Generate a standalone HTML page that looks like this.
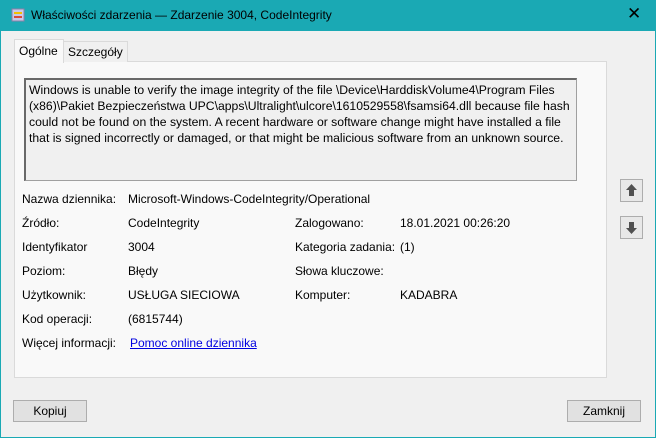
<!DOCTYPE html><html><head><style>
body{margin:0;width:656px;height:438px;background:#1aa9b4;font-family:"Liberation Sans",sans-serif;font-size:12px;color:#000;overflow:hidden;position:relative}
.win{position:absolute;left:1px;top:31px;width:654px;height:406px;background:#f0f0f0}
.title{position:absolute;left:0;top:0;width:656px;height:31px}
.abs{position:absolute;white-space:nowrap}
.panel{position:absolute;left:13px;top:30px;width:591px;height:315px;background:#f9f9f9;border:1px solid #dadada}
.tab{position:absolute;height:22px;line-height:22px;padding:0 4px}
.tb{position:absolute;left:23px;top:47px;width:544px;height:96px;border:1px solid #a0a0a0;border-top:2px solid #696969;border-left:2px solid #696969;background:#f0f0f0;padding:2px 3px;line-height:16px;font-size:12.2px;letter-spacing:0;white-space:nowrap;overflow:hidden}
.btn{position:absolute;width:72px;height:20px;border:1px solid #adadad;background:#e1e1e1;text-align:center;line-height:20px}
.ar{position:absolute;left:619px;width:21px;height:21px;border:1px solid #adadad;background:#e8e8e8}
</style></head><body>
<div class="title">
<svg class="abs" style="left:11px;top:8px" width="14" height="14"><rect x="1" y="1" width="12" height="12" fill="#c9c9e8" stroke="#8d7fa6"/><rect x="3" y="4" width="8" height="2" fill="#f2c000"/><rect x="3" y="8" width="8" height="2" fill="#d84a3a"/></svg>
<div class="abs" style="left:31px;top:8px;font-size:12px;color:#000">Właściwości zdarzenia — Zdarzenie 3004, CodeIntegrity</div>
<div class="abs" style="left:627px;top:4px;font-size:17px;color:#000">✕</div>
</div>
<div class="win">
<div class="panel"></div>
<div class="tab" style="left:13px;top:8px;height:23px;background:#f9f9f9;border:1px solid #dadada;border-bottom:none;width:40px">Ogólne</div>
<div class="tab" style="left:62px;top:10px;height:20px;line-height:20px;border:1px solid #dadada;border-bottom:none;background:#f0f0f0">Szczegóły</div>
<div class="tb">Windows is unable to verify the image integrity of the file \Device\HarddiskVolume4\Program Files<br>(x86)\Pakiet Bezpieczeństwa UPC\apps\Ultralight\ulcore\1610529558\fsamsi64.dll because file hash<br>could not be found on the system. A recent hardware or software change might have installed a file<br>that is signed incorrectly or damaged, or that might be malicious software from an unknown source.</div>
<div class="abs" style="left:21px;top:161px">Nazwa dziennika:</div><div class="abs" style="left:127px;top:161px">Microsoft-Windows-CodeIntegrity/Operational</div>
<div class="abs" style="left:21px;top:185px">Źródło:</div><div class="abs" style="left:127px;top:185px">CodeIntegrity</div>
<div class="abs" style="left:294px;top:185px">Zalogowano:</div><div class="abs" style="left:399px;top:185px">18.01.2021 00:26:20</div>
<div class="abs" style="left:21px;top:209px">Identyfikator</div><div class="abs" style="left:127px;top:209px">3004</div>
<div class="abs" style="left:294px;top:209px">Kategoria zadania:</div><div class="abs" style="left:399px;top:209px">(1)</div>
<div class="abs" style="left:21px;top:233px">Poziom:</div><div class="abs" style="left:127px;top:233px">Błędy</div>
<div class="abs" style="left:294px;top:233px">Słowa kluczowe:</div>
<div class="abs" style="left:21px;top:257px">Użytkownik:</div><div class="abs" style="left:127px;top:257px">USŁUGA SIECIOWA</div>
<div class="abs" style="left:294px;top:257px">Komputer:</div><div class="abs" style="left:399px;top:257px">KADABRA</div>
<div class="abs" style="left:21px;top:281px">Kod operacji:</div><div class="abs" style="left:127px;top:281px">(6815744)</div>
<div class="abs" style="left:21px;top:305px">Więcej informacji:</div><div class="abs" style="left:129px;top:305px;color:#0000e0;text-decoration:underline">Pomoc online dziennika</div>
<div class="ar" style="top:148px"><svg width="21" height="21"><path d="M10.5 4L16 10H13V16H8V10H5Z" fill="#505050"/></svg></div>
<div class="ar" style="top:185px"><svg width="21" height="21"><path d="M10.5 17L16 11H13V5H8V11H5Z" fill="#505050"/></svg></div>
<div class="btn" style="left:12px;top:369px">Kopiuj</div>
<div class="btn" style="left:566px;top:369px">Zamknij</div>
</div>
</body></html>
